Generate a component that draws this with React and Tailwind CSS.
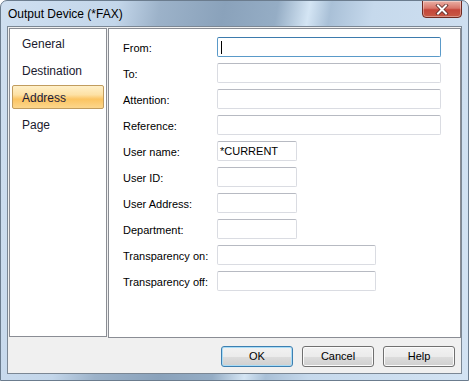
import React from 'react';

const ROWS = [
  { label: 'From:', w: 'w-[224px]', focus: true },
  { label: 'To:', w: 'w-[224px]' },
  { label: 'Attention:', w: 'w-[224px]' },
  { label: 'Reference:', w: 'w-[224px]' },
  { label: 'User name:', w: 'w-[80px]', value: '*CURRENT' },
  { label: 'User ID:', w: 'w-[80px]' },
  { label: 'User Address:', w: 'w-[80px]' },
  { label: 'Department:', w: 'w-[80px]' },
  { label: 'Transparency on:', w: 'w-[159px]' },
  { label: 'Transparency off:', w: 'w-[159px]' },
];

const NAV = ['General', 'Destination', 'Address', 'Page'];

const Btn = ({ children, primary }) => (
  <button
    className={
      'w-[72px] h-[21px] rounded-[3px] border text-[11px] text-black flex items-center justify-center ' +
      'bg-[linear-gradient(to_bottom,#f2f2f2_0%,#ebebeb_50%,#dddddd_50%,#cfcfcf_100%)] ' +
      (primary
        ? 'border-[#3c7fb1] shadow-[inset_0_0_0_1px_#a9dcf6]'
        : 'border-[#707070] shadow-[inset_0_0_0_1px_#fbfbfb]')
    }
  >
    {children}
  </button>
);

const App = () => {
  return (
    <div className="w-[469px] h-[381px] relative flex flex-col rounded-t-[7px] border border-[#6b7c8e] overflow-hidden font-['Liberation_Sans',Arial,sans-serif] bg-[linear-gradient(100deg,#cfdff0_0%,#c3d6ea_22%,#9cb2c9_30%,#8aa2bb_42%,#95adc5_52%,#d4e5f4_58%,#a9c0d7_62%,#c6d9ec_70%,#d3e3f3_100%)]">
      {/* title bar */}
      <div className="h-[25px] flex items-center pl-[7px] pt-[1px] text-[12px] text-black shrink-0">
        Output Device (*FAX)
      </div>
      <div className="absolute top-[-1px] right-[6px] w-[40px] h-[18px] rounded-b-[4px] border border-[#6e2a22] bg-[linear-gradient(to_bottom,#eab0a5_0%,#d8766a_45%,#c4463a_55%,#c85a45_100%)] flex items-center justify-center shadow-[inset_0_0_0_1px_rgba(255,255,255,0.35)]">
        <svg width="14" height="11" viewBox="0 0 14 11">
          <path d="M3 1.5 L11 9.5 M11 1.5 L3 9.5" stroke="#5a2a26" strokeWidth="3.6" strokeLinecap="square" />
          <path d="M3 1.5 L11 9.5 M11 1.5 L3 9.5" stroke="#ffffff" strokeWidth="2" strokeLinecap="square" />
        </svg>
      </div>

      {/* client area */}
      <div className="mx-[6px] h-[348px] border border-[#7b8794] bg-[#f0f0f0] flex flex-col pt-[1px] pl-[1px]">
        <div className="flex h-[310px]">
          <div className="w-[98px] h-[309px] border border-[#8a8d94] bg-white flex flex-col gap-[3px] pt-[2px] px-[2px]">
            {NAV.map((n) => (
              <div
                key={n}
                className={
                  'h-[24px] flex items-center pl-[9px] pt-[1px] rounded-[2px] border text-[12px] ' +
                  (n === 'Address'
                    ? 'border-[#c19c5e] bg-[linear-gradient(to_bottom,#fff0c9_0%,#fde1a4_40%,#fbc462_60%,#fcd68c_100%)] text-[#1b1b3a]'
                    : 'border-transparent text-[#1a1a2e]')
                }
              >
                {n}
              </div>
            ))}
          </div>
          <div className="ml-[1px] w-[353px] h-[310px] border border-[#8a8d94] bg-white flex flex-col gap-[6px] pt-[8px] pl-[14px]">
            {ROWS.map((r) => (
              <div key={r.label} className="flex items-center h-[20px]">
                <div className="w-[94px] text-[11px] text-black pt-[3px] whitespace-nowrap">{r.label}</div>
                <div
                  className={
                    r.w +
                    ' h-[20px] rounded-[2px] border bg-white flex items-center pl-[2px] text-[11px] text-black ' +
                    (r.focus
                      ? 'border-[#5a9ac9] border-t-[#3d7bad]'
                      : 'border-[#dadce2] border-t-[#b7bac2]')
                  }
                >
                  {r.focus && <span className="w-[1px] h-[13px] bg-black ml-[1px]" />}
                  {r.value}
                </div>
              </div>
            ))}
          </div>
        </div>
        <div className="flex justify-end gap-[9px] mt-[8px] pr-[6px]">
          <Btn primary>OK</Btn>
          <Btn>Cancel</Btn>
          <Btn>Help</Btn>
        </div>
      </div>
    </div>
  );
};

export default App;
